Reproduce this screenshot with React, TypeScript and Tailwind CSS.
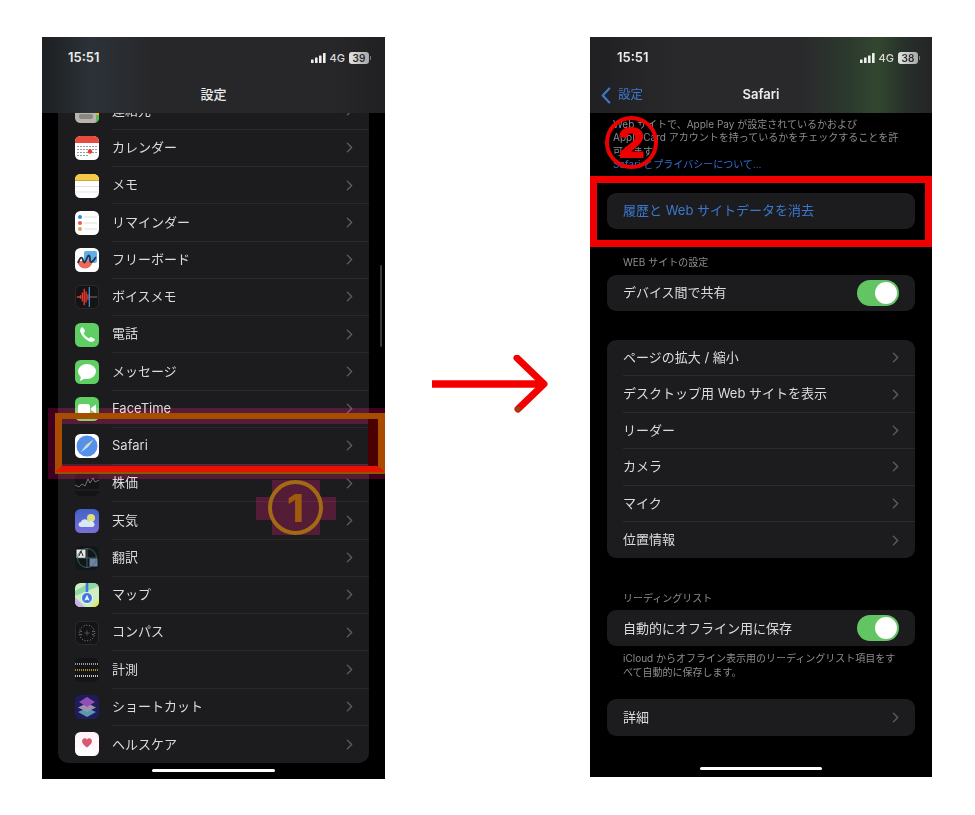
import React from "react";

const Tile = ({ children, cls = "" }: { children: React.ReactNode; cls?: string }) => (
  <svg viewBox="0 0 24 24" className={`w-6 h-6 shrink-0 rounded-[5.5px] ${cls}`}>{children}</svg>
);

const icons: Record<string, React.ReactNode> = {
  contacts: (
    <Tile cls="bg-[#b9b5ae]">
      <rect x="21" y="0" width="3" height="8" fill="#e0533d" />
      <rect x="21" y="8" width="3" height="8" fill="#e8b23a" />
      <rect x="21" y="16" width="3" height="8" fill="#58b85c" />
      <rect x="4" y="15" width="14" height="5" rx="2" fill="#8a8781" />
    </Tile>
  ),
  calendar: (
    <Tile cls="bg-white">
      <rect width="24" height="7" fill="#ea4a3c" />
      <g fill="#555">
        {[3, 6, 9, 12, 15, 18, 21].map((x) => (
          <React.Fragment key={x}>
            <rect x={x - 0.6} y="10" width="1.2" height="1" />
            <rect x={x - 0.6} y="13" width="1.2" height="1" />
            <rect x={x - 0.6} y="16" width="1.2" height="1" />
            {x < 15 && <rect x={x - 0.6} y="19" width="1.2" height="1" />}
          </React.Fragment>
        ))}
      </g>
      <circle cx="15" cy="15.5" r="2.2" fill="#ea3a30" />
    </Tile>
  ),
  notes: (
    <Tile cls="bg-white">
      <rect width="24" height="6" fill="#f4c945" />
      <rect y="6" width="24" height="1" fill="#c9a94a" />
      <path d="M0 12.5H24M0 18H24" stroke="#d6d6d6" strokeWidth="0.7" />
    </Tile>
  ),
  reminders: (
    <Tile cls="bg-white">
      <circle cx="5" cy="6" r="2" fill="#3b82e8" />
      <circle cx="5" cy="12" r="2" fill="#ea5a50" />
      <circle cx="5" cy="18" r="2" fill="#f0a040" />
      <path d="M9 6H22M9 12H22M9 18H22" stroke="#d2d2d2" strokeWidth="0.7" />
    </Tile>
  ),
  freeform: (
    <Tile cls="bg-white">
      <rect x="9" y="3" width="13" height="12" rx="2" fill="#5fb0e8" />
      <path d="M2.5 13A7.5 7.5 0 0 0 17.5 13Z" fill="#ec6a58" />
      <path d="M3 15C5 9 7 8 8 12S10 15 12 10S15 8 15 12S18 14 21 9" fill="none" stroke="#26324a" strokeWidth="1.8" />
    </Tile>
  ),
  voice: (
    <Tile cls="bg-[#141416] border border-[#2a2a2c]">
      <path d="M1 12H5M5 10V14M7 7V17M9 3V21M11 6V18M13 9V15" stroke="#e8392e" strokeWidth="1.5" />
      <path d="M14.5 1V23" stroke="#3ea6e8" strokeWidth="1.2" />
      <path d="M15 12H23" stroke="#999" strokeWidth="0.8" />
    </Tile>
  ),
  phone: (
    <Tile cls="bg-[#5fcf63]">
      <path d="M6.5 4.5C5 5.5 4.8 7.5 5.6 9.6C7.2 13.6 10.4 16.8 14.4 18.4C16.5 19.2 18.5 19 19.5 17.5C20 16.8 19.8 16.2 19.2 15.8L16.6 14.2C16 13.9 15.5 14 15.1 14.4L14 15.5C11.8 14.4 9.6 12.2 8.5 10L9.6 8.9C10 8.5 10.1 8 9.8 7.4L8.2 4.8C7.8 4.2 7.2 4 6.5 4.5Z" fill="#fff" />
    </Tile>
  ),
  messages: (
    <Tile cls="bg-[#5fcf63]">
      <ellipse cx="12" cy="11.5" rx="9" ry="7.4" fill="#fff" />
      <path d="M6 16L5 21L11 18Z" fill="#fff" />
    </Tile>
  ),
  facetime: (
    <Tile cls="bg-[#5fcf63]">
      <rect x="3" y="7" width="12" height="10" rx="2.5" fill="#fff" />
      <path d="M16 11L21 7.5V16.5L16 13Z" fill="#fff" />
    </Tile>
  ),
  safari: (
    <Tile cls="bg-white">
      <circle cx="12" cy="12" r="10.5" fill="#5590ea" />
      <path d="M18.5 5.5L11 11L13 13Z" fill="#dfeaa0" />
      <path d="M5.5 18.5L13 13L11 11Z" fill="#c8e4ff" />
    </Tile>
  ),
  stocks: (
    <Tile cls="bg-[#141416]">
      <path d="M0 13L4 15L7 12L10 14L13 7L15 11L18 6L20 10L24 8" fill="none" stroke="#9a9a9a" strokeWidth="0.7" />
      <path d="M0 18H24" stroke="#333" strokeWidth="0.6" />
    </Tile>
  ),
  weather: (
    <Tile cls="bg-gradient-to-b from-[#3f62c8] to-[#7a6fd8]">
      <circle cx="16" cy="9" r="4" fill="#dfe07a" />
      <path d="M6 18C3 18 2.5 13.5 6 13C7 9.5 12 9.5 13.5 12.5C17 11 20 13 19.5 16C19.3 17.5 18 18 17 18Z" fill="#dbe6f5" />
    </Tile>
  ),
  translate: (
    <Tile cls="bg-[#10161a]">
      <path d="M1.5 3.5H10.5V12H1.5Z" fill="#e8e8e8" />
      <path d="M14.5 12.5H22.5V20.5H14.5Z" fill="#6d83a8" />
      <circle cx="12" cy="12" r="9.5" fill="none" stroke="#4d6f66" strokeWidth="0.8" />
      <path d="M12 2V22M2 12H22" stroke="#4d6f66" strokeWidth="0.8" />
      <path d="M4 10L6 5L8 10" fill="none" stroke="#222" strokeWidth="1" />
    </Tile>
  ),
  maps: (
    <Tile cls="bg-[#cfeec0]">
      <path d="M0 13L24 3V0H14L0 8Z" fill="#8fd8a8" />
      <path d="M0 14L10 24H0Z" fill="#c8b4ea" />
      <path d="M16 24L24 16V24Z" fill="#e0e860" />
      <path d="M12 0V12" stroke="#3f78e0" strokeWidth="2.6" />
      <circle cx="12" cy="15" r="5.5" fill="#3f78e0" stroke="#fff" strokeWidth="0.9" />
      <path d="M12 11.8L14.6 17.8L12 16.6L9.4 17.8Z" fill="#fff" />
    </Tile>
  ),
  compass: (
    <Tile cls="bg-[#141416] border border-[#29292b]">
      <circle cx="12" cy="12" r="8.5" fill="none" stroke="#aaa" strokeWidth="1" strokeDasharray="1 2" />
      <path d="M12 9V15M9 12H15" stroke="#888" strokeWidth="0.5" />
      <path d="M5.5 9.5V11M18.5 9.5V11M5.5 13V14.5M18.5 13V14.5" stroke="#ccc" strokeWidth="0.8" />
    </Tile>
  ),
  measure: (
    <Tile cls="bg-[#141416]">
      <path d="M0 6H24" stroke="#9a9a9a" strokeWidth="2" strokeDasharray="1 1" />
      <path d="M0 12H24" stroke="#d6b53c" strokeWidth="1.6" strokeDasharray="1 1" />
      <path d="M0 18H24" stroke="#c4c4c4" strokeWidth="2" strokeDasharray="1 1" />
    </Tile>
  ),
  shortcuts: (
    <Tile cls="bg-[#1e1c5a]">
      <path d="M12 13L21 17L12 22L3 17Z" fill="#5a9ab0" />
      <path d="M12 8L21 12.5L12 17L3 12.5Z" fill="#a090b0" />
      <path d="M12 2L20 7L12 12L4 7Z" fill="#8f50b8" />
    </Tile>
  ),
  health: (
    <Tile cls="bg-gradient-to-b from-[#fff0fa] to-white">
      <path d="M12 15.5C7 12 6.5 9.5 7.5 7.5C8.8 5.5 11 6 12 7.5C13 6 15.2 5.5 16.5 7.5C17.5 9.5 17 12 12 15.5Z" fill="#d85a70" />
    </Tile>
  ),
};

const settings: [string, string][] = [
  ["contacts", "連絡先"],
  ["calendar", "カレンダー"],
  ["notes", "メモ"],
  ["reminders", "リマインダー"],
  ["freeform", "フリーボード"],
  ["voice", "ボイスメモ"],
  ["phone", "電話"],
  ["messages", "メッセージ"],
  ["facetime", "FaceTime"],
  ["safari", "Safari"],
  ["stocks", "株価"],
  ["weather", "天気"],
  ["translate", "翻訳"],
  ["maps", "マップ"],
  ["compass", "コンパス"],
  ["measure", "計測"],
  ["shortcuts", "ショートカット"],
  ["health", "ヘルスケア"],
];

const Chevron = () => (
  <svg viewBox="0 0 8 12" className="w-[7px] h-[11px] shrink-0" fill="none" stroke="#5e5e62" strokeWidth="1.6" strokeLinecap="round" strokeLinejoin="round">
    <path d="M1.5 1L6.5 6L1.5 11" />
  </svg>
);

const Toggle = () => (
  <div className="w-[42px] h-[26px] rounded-full bg-[#62c462] p-[2px] flex justify-end">
    <div className="w-[22px] h-[22px] rounded-full bg-white" />
  </div>
);

const Status = ({ time, level, cls }: { time: string; level: string; cls: string }) => (
  <div className={`flex items-center justify-between h-[41px] pt-[1px] ${cls}`}>
    <span className="text-[13px] font-semibold text-[#ececec]">{time}</span>
    <div className="flex items-center">
      <svg viewBox="0 0 15 10" className="w-[15px] h-[10px]" fill="#efefef">
        <rect x="0" y="6.5" width="2.6" height="3.5" rx="0.5" />
        <rect x="4" y="4.5" width="2.6" height="5.5" rx="0.5" />
        <rect x="8" y="2.5" width="2.6" height="7.5" rx="0.5" />
        <rect x="12" y="0" width="2.6" height="10" rx="0.5" />
      </svg>
      <span className="ml-[4px] text-[11px] font-medium text-[#d8d8d8]">4G</span>
      <span className="ml-[4px] w-[20px] h-[12px] rounded-[3px] bg-gradient-to-r from-[#e4e4e4] to-[#a8a8a8] text-[10px] leading-[12px] font-semibold text-[#2a2a2a] text-center">{level}</span>
      <span className="ml-[1px] w-[1px] h-[4px] bg-[#777]" />
    </div>
  </div>
);

const Row = ({ label, last }: { label: string; last?: boolean }) => (
  <div className={`flex items-center ml-4 pr-4 h-[36.4px] text-[13px] text-[#dcdcdc] ${last ? "" : "border-b border-[#2b2b2d]"}`}>
    <span className="flex-1">{label}</span>
    <Chevron />
  </div>
);

const LeftPhone = () => (
  <div className="relative w-[343px] h-[742px] shrink-0 bg-black overflow-hidden">
    <header className="relative z-10 h-[76px] bg-[linear-gradient(90deg,#1d1f21_0%,#2b3238_14%,#2a2f34_20%,#27272a_32%,#27272a_85%,#202022_100%)]">
      <Status time="15:51" level="39" cls="pl-[26px] pr-[14px]" />
      <div className="text-center text-[13px] font-medium text-[#ececec] leading-[33px]">設定</div>
    </header>
    <div className="mx-4 -mt-[20.5px] h-[670px] bg-[#1c1c1e] rounded-b-[10px] overflow-hidden">
      {settings.map(([key, label], i) => (
        <div key={key} className="flex items-center h-[37.25px] pl-[17px]">
          {icons[key]}
          <div className={`flex-1 h-full ml-[13px] pr-4 flex items-center ${i === settings.length - 1 ? "" : "border-b border-[#29292b]"}`}>
            <span className="flex-1 text-[13px] text-[#dcdcdc]">{label}</span>
            <Chevron />
          </div>
        </div>
      ))}
    </div>
    <div className="absolute left-[110px] bottom-[7px] w-[123px] h-[3.5px] rounded-full bg-white" />
    <div className="absolute right-[3px] top-[228px] w-[2px] h-[82px] rounded-full bg-[#3a3a3c]" />

    {/* annotation 1 : highlight rectangle, drawn over the Safari row */}
    <div className="absolute left-[6px] right-0 top-[371px] h-[71px] border-t-[16px] border-b-[15px] border-l-[14px] border-r-[17px] border-[#40001e] mix-blend-screen" />
    <div className="absolute left-[326px] top-[382px] w-[10px] h-[46px] bg-[#4a0000]" />
    <div className="absolute left-[13px] right-0 top-[376px] h-[59px] border-[6px] border-l-[7px] border-r-[7px] border-[#a84c00] border-b-[#e81200] shadow-[0_2px_0_#8a5a00]" />

    {/* annotation 1 : circled number */}
    <div className="absolute left-[214px] top-[460px] w-[16px] h-[23px] bg-[#40001e] mix-blend-screen" />
    <div className="absolute left-[278px] top-[460px] w-[16px] h-[23px] bg-[#40001e] mix-blend-screen" />
    <div className="absolute left-[230px] top-[443px] w-[48px] h-[55px] bg-[#40001e] mix-blend-screen" />
    <div className="absolute left-[226px] top-[443px] w-[55px] h-[55px] rounded-full border-[4px] border-[#a26a12] flex items-center justify-center">
      <span className="text-[38px] font-extrabold text-[#a05a10] leading-none">1</span>
    </div>
  </div>
);

const RightPhone = () => (
  <div className="relative w-[342px] h-[740px] shrink-0 bg-black overflow-hidden">
    <header className="h-[76px] bg-[linear-gradient(90deg,#202022_0%,#29292b_25%,#29292b_62%,#2c3a2e_76%,#33472f_84%,#27302a_92%,#242426_100%)]">
      <Status time="15:51" level="38" cls="pl-[27px] pr-[12px]" />
      <div className="relative flex items-center justify-center h-[34px]">
        <div className="absolute left-[11px] flex items-center text-[#3b78cf]">
          <svg viewBox="0 0 10 18" className="w-[10px] h-[17px]" fill="none" stroke="#3b78cf" strokeWidth="2.2" strokeLinecap="round" strokeLinejoin="round">
            <path d="M8.5 1.5L1.5 9L8.5 16.5" />
          </svg>
          <span className="ml-[7px] text-[12.5px]">設定</span>
        </div>
        <span className="text-[13px] font-semibold text-[#ececec]">Safari</span>
      </div>
    </header>

    <div className="pl-[23px] pr-[30px] pt-[5px] text-[10px] leading-[13.4px] text-[#8d8d92] h-[80px]">
      <p>Web サイトで、Apple Pay が設定されているかおよび</p>
      <p>Apple Card アカウントを持っているかをチェックすることを許可します</p>
      <p className="text-[#2f6fd0]">Safari とプライバシーについて...</p>
    </div>

    <section className="mx-[17px] rounded-[9px] bg-[#1c1c1e] h-[36px] flex items-center pl-4 text-[13px] text-[#3b78cf]">履歴と Web サイトデータを消去</section>

    <h3 className="mt-[26px] ml-[33px] text-[10px] leading-[14px] text-[#8d8d92]">WEB サイトの設定</h3>
    <section className="mt-[6px] mx-[17px] rounded-[9px] bg-[#1c1c1e] h-[36px] flex items-center justify-between pl-4 pr-4 text-[13px] text-[#dcdcdc]">
      <span>デバイス間で共有</span>
      <Toggle />
    </section>

    <section className="mt-[29px] mx-[17px] rounded-[9px] bg-[#1c1c1e] overflow-hidden">
      <Row label="ページの拡大 / 縮小" />
      <Row label="デスクトップ用 Web サイトを表示" />
      <Row label="リーダー" />
      <Row label="カメラ" />
      <Row label="マイク" />
      <Row label="位置情報" last />
    </section>

    <h3 className="mt-[33px] ml-[33px] text-[10px] leading-[14px] text-[#8d8d92]">リーディングリスト</h3>
    <section className="mt-[5px] mx-[17px] rounded-[9px] bg-[#1c1c1e] h-[36px] flex items-center justify-between pl-4 pr-4 text-[13px] text-[#dcdcdc]">
      <span>自動的にオフライン用に保存</span>
      <Toggle />
    </section>
    <p className="mt-[6px] mx-[33px] text-[10px] leading-[13.4px] text-[#8d8d92]">iCloud からオフライン表示用のリーディングリスト項目をすべて自動的に保存します。</p>

    <section className="mt-[20px] mx-[17px] rounded-[9px] bg-[#1c1c1e] overflow-hidden">
      <Row label="詳細" last />
    </section>

    <div className="absolute left-[110px] bottom-[7px] w-[122px] h-[3.5px] rounded-full bg-white" />

    {/* annotation 2 */}
    <div className="absolute inset-x-0 top-[139px] h-[71px] border-[7px] border-[#f00000] pointer-events-none" />
    <div className="absolute left-[15px] top-[79px] w-[53px] h-[53px] rounded-full border-[4px] border-[#ee0000] flex items-center justify-center">
      <span className="text-[42px] font-black text-[#ee0000] leading-none">2</span>
    </div>
  </div>
);

export default function App() {
  return (
    <div className="w-[975px] h-[815px] bg-white flex items-start pt-[37px] pl-[42px] overflow-hidden [font-family:Inter,'Noto_Sans_CJK_JP',sans-serif]">
      <LeftPhone />
      <div className="w-[205px] shrink-0 pl-[45px] pt-[318px]">
        <svg viewBox="0 0 122 58" className="w-[122px] h-[58px]" fill="none" stroke="#f40000" strokeWidth="7" strokeLinecap="round" strokeLinejoin="round">
          <path d="M2 29H114" strokeLinecap="butt" strokeWidth="7.5" />
          <path d="M87 3L114 29L88 54" />
          <circle cx="88" cy="54" r="2.6" fill="#8a4a10" stroke="none" />
        </svg>
      </div>
      <RightPhone />
    </div>
  );
}
